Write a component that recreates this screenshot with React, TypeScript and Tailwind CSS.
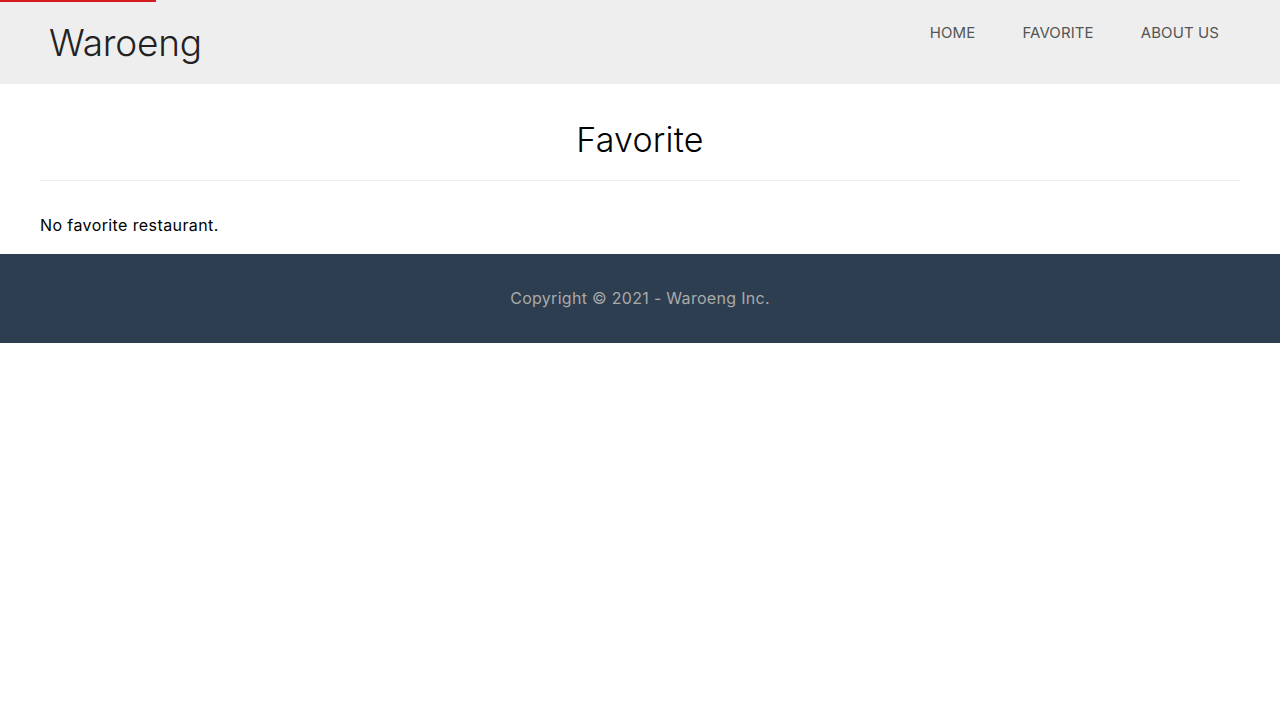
const FONT = { fontFamily: 'Inter, "Noto Sans", sans-serif' };

const NAV = ['HOME', 'FAVORITE', 'ABOUT US'];

export default function App() {
  return (
    <div className="min-h-[720px] bg-white" style={FONT}>
      {/* skip link bar */}
      <div className="absolute left-0 top-0 h-[2px] w-[156px] bg-[#d71920]" />

      <header className="flex h-[84px] items-center justify-between bg-[#eeeeee] pl-[49px] pr-[61px]">
        <h1 className="pt-[1px] text-[37px] font-light tracking-[-0.2px] text-[#222]">Waroeng</h1>
        <nav className="flex gap-[47px] self-start pt-[22px]">
          {NAV.map((item) => (
            <a key={item} href="#" className="text-[15px] tracking-[0.1px] text-[#555]">
              {item}
            </a>
          ))}
        </nav>
      </header>

      <main className="px-[40px]">
        <h2 className="border-b border-[#eeeeee] pt-[32px] pb-[16px] text-center text-[34px] font-light leading-[48px] tracking-[0.2px] text-black">
          Favorite
        </h2>
        <p className="pt-[32px] pb-[17px] text-[16px] leading-[24px] tracking-[0.4px] text-black">
          No favorite restaurant.
        </p>
      </main>

      <footer className="flex h-[89px] items-center justify-center bg-[#2c3e50] pb-[1px]">
        <p className="text-[16px] tracking-[0.3px] text-[#aaaaaa]">Copyright © 2021 - Waroeng Inc.</p>
      </footer>
    </div>
  );
}
